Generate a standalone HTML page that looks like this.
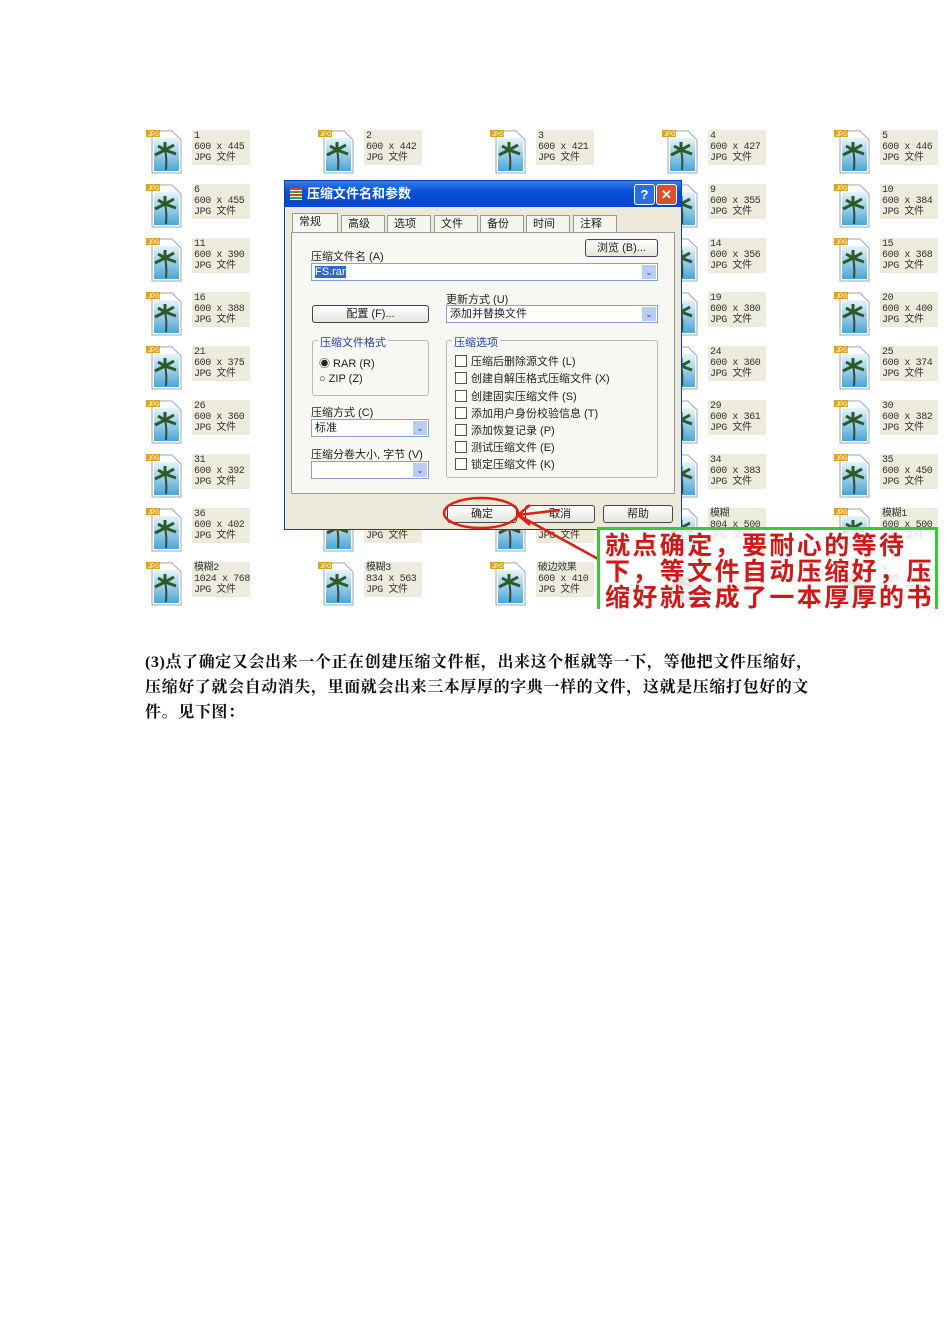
<!DOCTYPE html>
<html><head><meta charset="utf-8">
<style>
body{margin:0;background:#fff;width:950px;height:1344px;position:relative;overflow:hidden;font-family:"Liberation Sans","Noto Sans CJK SC",sans-serif}
.it{position:absolute;width:120px;height:48px}
.it svg{position:absolute;left:0;top:0}
.lb{position:absolute;left:46px;top:2px;background:#ecebdc;color:#333;font:10px/11px "Liberation Mono","Noto Sans CJK SC",monospace;padding:1px 2px;width:54px;white-space:pre;letter-spacing:-0.4px}
.dlg{position:absolute;left:284px;top:180px;width:398px;height:350px;background:#ece9d8;border:1px solid #0a3fb8;box-sizing:border-box;font-size:11px;color:#222}
.tb{position:absolute;left:0;top:0;right:0;height:26px;background:linear-gradient(#2f7fe8,#0a52d8 40%,#0646c4);color:#fff;font-weight:bold;font-size:13px;line-height:26px;padding-left:22px}
.tab{position:absolute;top:34px;height:17px;border:1px solid #999;border-bottom:none;background:#f6f5ee;font-size:11px;line-height:17px;padding-left:6px;box-sizing:border-box}
.pn{position:absolute;left:6px;top:51px;width:384px;height:262px;border:1px solid #999;background:#f8f8f3;box-sizing:border-box}
.ab{position:absolute;font-size:11px}
.fld{position:absolute;background:#fff;border:1px solid #8aa0c8;box-sizing:border-box;height:18px;font-size:11px;line-height:16px;padding-left:3px}
.dd{position:absolute;right:1px;top:1px;width:14px;height:14px;background:#b9cdf2;color:#2a4a9a;font-size:9px;line-height:14px;text-align:center}
.btn{position:absolute;border:1px solid #445;border-radius:3px;background:linear-gradient(#fff,#e6e5dc);height:18px;box-sizing:border-box;text-align:center;font-size:11px;line-height:16px}
.gb{position:absolute;border:1px solid #bbb;border-radius:3px;box-sizing:border-box}
.cb{position:absolute;font-size:11px;line-height:13px}
.cb i{display:inline-block;width:10px;height:10px;border:1px solid #555;background:#fff;vertical-align:-2px;margin-right:4px}
.p{position:absolute;left:145px;font-family:"Liberation Serif","Noto Serif CJK SC",serif;font-size:16px;font-weight:bold;color:#111;letter-spacing:0.6px;white-space:nowrap}
</style></head><body>
<svg width="0" height="0" style="position:absolute"><defs>
<linearGradient id="g" x1="0" y1="0" x2="0" y2="1"><stop offset="0" stop-color="#e6f4fb"/><stop offset="1" stop-color="#4aa6d6"/></linearGradient>
<symbol id="ic" viewBox="0 0 40 48"><path d="M6 3h20l9 9v33H6z" fill="#fff" stroke="#9aa" /><rect x="8" y="10" width="25" height="33" fill="url(#g)"/><path d="M20 42 Q21 30 19 22" stroke="#3b4a2a" stroke-width="2" fill="none"/><path d="M19 22 L9 27 M19 22 L30 26 M19 22 L12 18 M19 22 L28 17 M19 22 L19 14" stroke="#2c5a2a" stroke-width="3" fill="none"/><rect x="0" y="2" width="14" height="7" fill="#d9a520"/><text x="2" y="8" font-size="6" fill="#fff" font-family="Liberation Sans">JPG</text></symbol>
</defs></svg>
<div id="grid"></div>
<script>
var cols=[146,318,490,662,834],rows=[128,182,236,290,344,398,452,506,560];
var d=[[["1","445"],["2","442"],["3","421"],["4","427"],["5","446"]],
[["6","455"],["7","400"],["8","400"],["9","355"],["10","384"]],
[["11","390"],["12","400"],["13","400"],["14","356"],["15","368"]],
[["16","388"],["17","400"],["18","400"],["19","380"],["20","400"]],
[["21","375"],["22","400"],["23","400"],["24","360"],["25","374"]],
[["26","360"],["27","400"],["28","400"],["29","361"],["30","382"]],
[["31","392"],["32","400"],["33","400"],["34","383"],["35","450"]],
[["36","402"],["37","400"],["38","400"],["模糊","500","804"],["模糊1","500","600"]],
[["模糊2","768","1024"],["模糊3","563","834"],["破边效果","410"],["x","400"],["y","400"]]];
var h="";
for(var r=0;r<9;r++)for(var c=0;c<5;c++){var e=d[r][c];h+='<div class="it" style="left:'+cols[c]+'px;top:'+rows[r]+'px"><svg width="40" height="48"><use href="#ic"/></svg><div class="lb">'+e[0]+'\n'+(e[2]||'600')+' x '+e[1]+'\nJPG 文件</div></div>';}
document.getElementById("grid").innerHTML=h;
</script>
<div class="dlg">
<div class="tb"><span style="position:absolute;left:5px;top:7px;width:12px;height:12px;background:repeating-linear-gradient(#e33 0 2px,#fff 2px 3px,#3a3 3px 5px,#fff 5px 6px)"></span>压缩文件名和参数
<span style="position:absolute;right:26px;top:3px;width:19px;height:19px;background:#2a6ee6;border:1px solid #fff;border-radius:3px;text-align:center;line-height:19px">?</span>
<span style="position:absolute;right:4px;top:3px;width:19px;height:19px;background:#d9512c;border:1px solid #fff;border-radius:3px;text-align:center;line-height:19px">✕</span></div>
<div class="tab" style="left:7px;width:46px;top:32px;height:20px;background:#f8f8f3">常规</div>
<div class="tab" style="left:56px;width:44px">高级</div>
<div class="tab" style="left:102px;width:44px">选项</div>
<div class="tab" style="left:149px;width:44px">文件</div>
<div class="tab" style="left:195px;width:44px">备份</div>
<div class="tab" style="left:241px;width:44px">时间</div>
<div class="tab" style="left:288px;width:44px">注释</div>
<div class="pn">
<div class="ab" style="left:19px;top:15px">压缩文件名 (A)</div>
<div class="btn" style="left:293px;top:6px;width:73px">浏览 (B)...</div>
<div class="fld" style="left:19px;top:30px;width:347px"><span style="background:#316ac5;color:#fff">FS.rar</span><div class="dd">⌄</div></div>
<div class="ab" style="left:154px;top:58px">更新方式 (U)</div>
<div class="btn" style="left:20px;top:72px;width:117px">配置 (F)...</div>
<div class="fld" style="left:154px;top:72px;width:212px">添加并替换文件<div class="dd">⌄</div></div>
<div class="gb" style="left:20px;top:107px;width:117px;height:56px"></div>
<div class="ab" style="left:26px;top:101px;background:#f8f8f3;color:#2244aa;padding:0 2px">压缩文件格式</div>
<div class="ab" style="left:27px;top:122px">◉ RAR (R)</div>
<div class="ab" style="left:27px;top:140px">○ ZIP (Z)</div>
<div class="gb" style="left:154px;top:107px;width:212px;height:138px"></div>
<div class="ab" style="left:160px;top:101px;background:#f8f8f3;color:#2244aa;padding:0 2px">压缩选项</div>
<div class="cb" style="left:163px;top:122px"><i></i>压缩后删除源文件 (L)</div>
<div class="cb" style="left:163px;top:139px"><i></i>创建自解压格式压缩文件 (X)</div>
<div class="cb" style="left:163px;top:157px"><i></i>创建固实压缩文件 (S)</div>
<div class="cb" style="left:163px;top:174px"><i></i>添加用户身份校验信息 (T)</div>
<div class="cb" style="left:163px;top:191px"><i></i>添加恢复记录 (P)</div>
<div class="cb" style="left:163px;top:208px"><i></i>测试压缩文件 (E)</div>
<div class="cb" style="left:163px;top:225px"><i></i>锁定压缩文件 (K)</div>
<div class="ab" style="left:19px;top:171px">压缩方式 (C)</div>
<div class="fld" style="left:19px;top:186px;width:118px">标准<div class="dd">⌄</div></div>
<div class="ab" style="left:19px;top:213px">压缩分卷大小, 字节 (V)</div>
<div class="fld" style="left:19px;top:228px;width:118px"><div class="dd">⌄</div></div>
</div>
<div class="btn" style="left:162px;top:324px;width:70px">确定</div>
<div class="btn" style="left:240px;top:324px;width:70px">取消</div>
<div class="btn" style="left:318px;top:324px;width:70px">帮助</div>
</div>
<svg style="position:absolute;left:0;top:0" width="950" height="620">
<ellipse cx="481" cy="513" rx="37" ry="15" fill="none" stroke="#d21" stroke-width="2.5"/>
<path d="M518 515 L600 560 M518 515 L560 510 M518 515 L530 505 M518 515 L530 525" stroke="#d21" stroke-width="2.5" fill="none"/>
</svg>
<div style="position:absolute;left:597px;top:527px;width:341px;height:82px;border:3px solid #3c3;border-bottom:none;box-sizing:border-box;background:rgba(255,255,255,0.85);color:#d01818;font:bold 25px/26px 'Noto Sans CJK SC',sans-serif;padding:1px 0 0 5px;letter-spacing:2.4px;white-space:nowrap;overflow:hidden">就点确定，要耐心的等待<br>下，等文件自动压缩好，压<br>缩好就会成了一本厚厚的书</div>
<div class="p" style="top:649px">(3)点了确定又会出来一个正在创建压缩文件框，出来这个框就等一下，等他把文件压缩好，</div>
<div class="p" style="top:674px">压缩好了就会自动消失，里面就会出来三本厚厚的字典一样的文件，这就是压缩打包好的文</div>
<div class="p" style="top:699px">件。见下图：</div>
</body></html>
